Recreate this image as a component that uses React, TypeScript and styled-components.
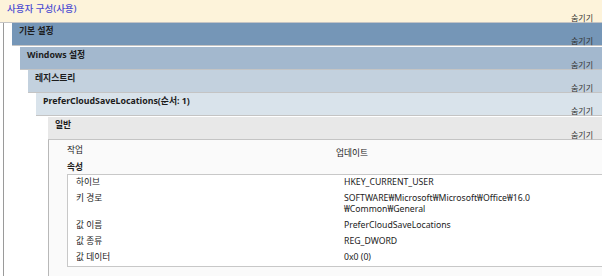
import React from 'react';
import styled, {createGlobalStyle} from 'styled-components';

const GlobalStyle = createGlobalStyle`
	html, body {
		margin: 0;
		padding: 0;
		background: #ffffff;
	}
	body {
		font-family: 'Noto Sans', 'Noto Sans CJK KR', sans-serif;
		font-size: 8.7px;
		color: #222222;
		overflow: hidden;
	}
`;

// one entry per nested section: header colour, indent from parent, gap below header
const levels = [
	{title: '사용자 구성(사용)', bg: '#fdf3da', indent: 0, gap: 0},
	{title: '기본 설정', bg: '#7596b7', indent: 12, gap: 1},
	{title: 'Windows 설정', bg: '#a3b8ce', indent: 8, gap: 0},
	{title: '레지스트리', bg: '#c3d1de', indent: 8, gap: 0},
	{title: 'PreferCloudSaveLocations(순서: 1)', bg: '#d9e3eb', indent: 8, gap: 1},
	{title: '일반', bg: '#e8e8e8', indent: 12, gap: 0}
];

const properties = [
	{label: '하이브', value: ['HKEY_CURRENT_USER']},
	{
		label: '키 경로',
		value: ['SOFTWARE₩Microsoft₩Microsoft₩Office₩16.0', '₩Common₩General']
	},
	{label: '값 이름', value: ['PreferCloudSaveLocations']},
	{label: '값 종류', value: ['REG_DWORD']},
	{label: '값 데이터', value: ['0x0 (0)']}
];

export default function App() {
	const renderDetail = () => (
		<Detail>
			<ActionRow>
				<ActionLabel>작업</ActionLabel>
				<ActionValue>업데이트</ActionValue>
			</ActionRow>
			<PropsTitle>속성</PropsTitle>
			<PropsTable>
				{properties.map((p) => (
					<PropRow key={p.label}>
						<PropLabel>{p.label}</PropLabel>
						<PropValue>
							{p.value.map((line) => (
								<div key={line}>{line}</div>
							))}
						</PropValue>
					</PropRow>
				))}
			</PropsTable>
		</Detail>
	);

	const renderLevel = (i: number): React.ReactNode => {
		const level = levels[i];
		return (
			<Section $indent={level.indent} $first={i === 0}>
				<Header $bg={level.bg} $gap={level.gap}>
					<Title $main={i === 0}>{level.title}</Title>
					<Hide>숨기기</Hide>
				</Header>
				{i < levels.length - 1 ? renderLevel(i + 1) : renderDetail()}
			</Section>
		);
	};

	return (
		<>
			<GlobalStyle />
			<Page>{renderLevel(0)}</Page>
		</>
	);
}

const Page = styled.div`
	width: 602px;
	height: 276px;
	position: relative;
	&::before {
		content: '';
		position: absolute;
		left: 3px;
		top: 22px;
		bottom: 0;
		border-left: 1px solid #9a9a9a;
	}
`;

const Section = styled.div<{$indent: number; $first: boolean}>`
	display: flex;
	flex-direction: column;
	margin-left: ${(p) => (p.$first ? 0 : p.$indent)}px;
`;

const Header = styled.div<{$bg: string; $gap: number}>`
	position: relative;
	z-index: 1;
	height: 23px;
	margin-bottom: ${(p) => p.$gap}px;
	background: ${(p) => p.$bg};
	border-bottom: 1px solid #c4c4c4;
	box-sizing: border-box;
	display: flex;
	flex-direction: column;
	padding: 3px 9px 0 7px;
`;

const Title = styled.div<{$main: boolean}>`
	font-size: ${(p) => (p.$main ? 9.5 : 8.8)}px;
	line-height: 11px;
	font-weight: ${(p) => (p.$main ? 500 : 700)};
	color: ${(p) => (p.$main ? '#4b4bd2' : '#1c1c1c')};
	white-space: nowrap;
`;

const Hide = styled.div`
	margin-left: auto;
	margin-top: auto;
	font-size: 8px;
	line-height: 8px;
	color: #333333;
`;

const Detail = styled.div`
	height: 140px;
	background: #fafafa;
	border-left: 1px solid #b8b8b8;
	padding: 4px 0 0 18px;
	display: flex;
	flex-direction: column;
`;

const ActionRow = styled.div`
	display: grid;
	grid-template-columns: 269px 1fr;
	line-height: 11px;
`;

const ActionLabel = styled.div`
	padding-top: 1px;
`;

const ActionValue = styled.div`
	padding-top: 4px;
`;

const PropsTitle = styled.div`
	font-weight: 700;
	line-height: 11px;
	margin-top: 3px;
`;

const PropsTable = styled.div`
	margin-top: 1px;
	background: #ffffff;
	border: 1px solid #c8c8c8;
	border-right: none;
	padding: 0;
	display: flex;
	flex-direction: column;
`;

const PropRow = styled.div`
	display: grid;
	grid-template-columns: 276px 1fr;
	line-height: 11px;
	padding: 2px 0 3px 0;
`;

const PropLabel = styled.div`
	padding-left: 8px;
`;

const PropValue = styled.div`
	color: #222222;
`;
